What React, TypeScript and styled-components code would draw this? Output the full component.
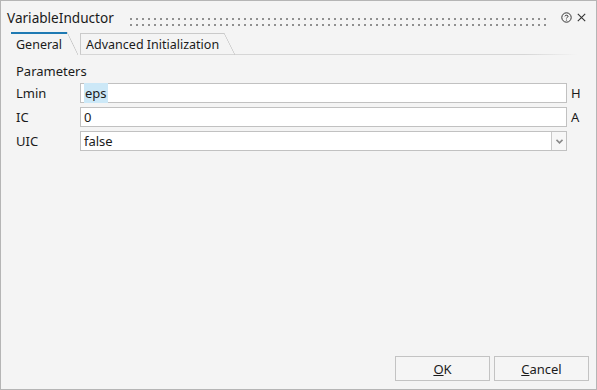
import { FC } from "react";
import styled, { createGlobalStyle } from "styled-components";

const GlobalStyle = createGlobalStyle`
  html, body {
    margin: 0;
    padding: 0;
    background: #ffffff;
  }
  body {
    font-family: "Noto Sans", "Liberation Sans", Arial, sans-serif;
    color: #1b1b1b;
  }
  * {
    box-sizing: border-box;
  }
`;

type Param = {
  label: string;
  value: string;
  unit?: string;
  combo?: boolean;
  selected?: boolean;
};

const params: Param[] = [
  { label: "Lmin", value: "eps", unit: "H", selected: true },
  { label: "IC", value: "0", unit: "A" },
  { label: "UIC", value: "false", combo: true },
];

const App: FC = () => {
  return (
    <>
      <GlobalStyle />
      <Dialog>
        <TitleBar>
          <Title>VariableInductor</Title>
          <Grip>
            <svg width="100%" height="8">
              <defs>
                <pattern id="gripDots" width="6" height="6" patternUnits="userSpaceOnUse">
                  <rect width="2" height="2" fill="#909090" />
                </pattern>
              </defs>
              <rect width="100%" height="8" fill="url(#gripDots)" />
            </svg>
          </Grip>
          <TitleIcon aria-label="help">
            <svg width="11" height="11" viewBox="0 0 11 11">
              <circle cx="5.5" cy="5.5" r="4.7" fill="none" stroke="#333" strokeWidth="1" />
              <path d="M3.9 4.3 C3.9 2.9 7.1 2.9 7.1 4.3 C7.1 5.3 5.5 5.3 5.5 6.4" fill="none" stroke="#333" strokeWidth="1" />
              <circle cx="5.5" cy="8" r="0.6" fill="#333" />
            </svg>
          </TitleIcon>
          <TitleIcon aria-label="close">
            <svg width="9" height="9" viewBox="0 0 9 9">
              <path d="M0.8 0.8 L8.2 8.2 M8.2 0.8 L0.8 8.2" stroke="#333" strokeWidth="1.1" />
            </svg>
          </TitleIcon>
        </TitleBar>

        <TabBar>
          <Tab $active>General</Tab>
          <Tab>Advanced Initialization</Tab>
          <TabRule />
        </TabBar>

        <Content>
          <SectionLabel>Parameters</SectionLabel>
          <ParamGrid>
            {params.map((p) => (
              <ParamRow key={p.label}>
                <ParamLabel>{p.label}</ParamLabel>
                <Field>
                  <FieldText>
                    {p.selected ? <Selection>{p.value}</Selection> : p.value}
                  </FieldText>
                  {p.combo && (
                    <ComboButton>
                      <svg width="7" height="5" viewBox="0 0 7 5">
                        <path d="M0.5 0.8 L3.5 3.8 L6.5 0.8" fill="none" stroke="#8a8a8a" strokeWidth="1.6" />
                      </svg>
                    </ComboButton>
                  )}
                </Field>
                <Unit>{p.unit}</Unit>
              </ParamRow>
            ))}
          </ParamGrid>
        </Content>

        <ButtonRow>
          <Button>
            <u>O</u>K
          </Button>
          <Button>
            <u>C</u>ancel
          </Button>
        </ButtonRow>
      </Dialog>
    </>
  );
};

export default App;

const Dialog = styled.div`
  width: 597px;
  height: 390px;
  border: 1px solid #b5b5b5;
  background: #f4f4f4;
  display: flex;
  flex-direction: column;
  overflow: hidden;
`;

const TitleBar = styled.div`
  height: 30px;
  display: flex;
  align-items: center;
  padding: 3px 7px 0 6px;
`;

const Title = styled.div`
  font-size: 13.6px;
  color: #1a1a1a;
  white-space: nowrap;
`;

const Grip = styled.div`
  flex: 1;
  align-self: flex-start;
  height: 8px;
  margin: 14px 10px 0 16px;
  display: flex;
`;

const TitleIcon = styled.span`
  display: inline-flex;
  align-items: center;
  justify-content: center;
  width: 15px;
  height: 14px;
`;

const TabBar = styled.div`
  display: flex;
  align-items: flex-end;
  height: 24px;
  padding-left: 10px;
`;

const Tab = styled.div<{ $active?: boolean }>`
  position: relative;
  height: ${(p) => (p.$active ? "23px" : "22px")};
  display: flex;
  align-items: center;
  padding: 0 5px;
  margin-right: 13px;
  font-size: 12.5px;
  color: #1b1b1b;
  background: #f4f4f4;
  border-top: ${(p) => (p.$active ? "2px solid #1f7ab3" : "1px solid #cacaca")};
  border-left: ${(p) => (p.$active ? "none" : "1px solid #cacaca")};
  border-bottom: ${(p) => (p.$active ? "1px solid #f4f4f4" : "1px solid #d6d6d6")};

  &::after {
    content: "";
    position: absolute;
    top: ${(p) => (p.$active ? "-2px" : "-1px")};
    right: -11px;
    width: 11px;
    bottom: -1px;
    background: linear-gradient(
      to top right,
      transparent calc(50% - 0.7px),
      #c6c6c6 50%,
      transparent calc(50% + 0.7px)
    );
  }
`;

const TabRule = styled.div`
  flex: 1;
  height: 1px;
  margin-right: 18px;
  margin-left: -13px;
  background: linear-gradient(to right, #d6d6d6 85%, rgba(214, 214, 214, 0));
`;

const Content = styled.div`
  padding: 8px 0 0 15px;
`;

const SectionLabel = styled.div`
  font-size: 13px;
  height: 17px;
  line-height: 17px;
  margin-bottom: 3px;
`;

const ParamGrid = styled.div`
  display: flex;
  flex-direction: column;
  gap: 4px;
`;

const ParamRow = styled.div`
  display: grid;
  grid-template-columns: 64px 487px 1fr;
  align-items: center;
  height: 20px;
`;

const ParamLabel = styled.div`
  font-size: 13px;
`;

const Field = styled.div`
  display: flex;
  height: 20px;
  border: 1px solid #c1c1c1;
  background: #ffffff;
`;

const FieldText = styled.div`
  flex: 1;
  font-size: 13px;
  line-height: 18px;
  padding-left: 3px;
`;

const Selection = styled.span`
  background: #cce8f7;
  padding: 1px 1px;
`;

const ComboButton = styled.div`
  width: 15px;
  border-left: 1px solid #c9c9c9;
  background: #f7f7f7;
  display: flex;
  align-items: center;
  justify-content: center;
`;

const Unit = styled.div`
  font-size: 13px;
  padding-left: 4px;
`;

const ButtonRow = styled.div`
  margin-top: auto;
  display: flex;
  justify-content: flex-end;
  gap: 4px;
  padding: 0 7px 8px 0;
`;

const Button = styled.button`
  width: 95px;
  height: 25px;
  border: 1px solid #c3c3c3;
  background: #f5f5f5;
  font-family: inherit;
  font-size: 13px;
  color: #1b1b1b;
  padding: 0;
  border-radius: 0;
`;
